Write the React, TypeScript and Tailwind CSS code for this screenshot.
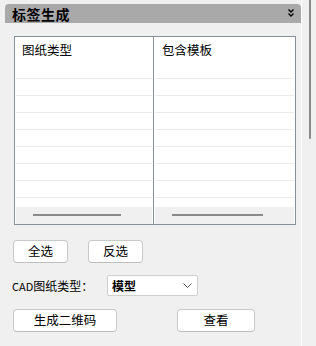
import React from "react";

const font = { fontFamily: '"Noto Sans CJK SC", "Noto Sans", sans-serif' };

function Column({ title, pl }: { title: string; pl: string }) {
  return (
    <div className="flex flex-col h-full bg-white">
      <div className="h-[170px] overflow-hidden px-[1px]">
        <div className={`h-[41px] pt-[4px] text-[12.5px] leading-[17px] text-black ${pl}`}>{title}</div>
        {Array.from({ length: 8 }).map((_, i) => (
          <div key={i} className="h-[17px] border-t border-[#ececec]" />
        ))}
      </div>
      <div className="h-[17px] mx-[1px] bg-[#f0f0f0] pt-[7px] pl-[17px] pr-[31px]">
        <div className="h-[2px] bg-[#8a8a8a]" />
      </div>
    </div>
  );
}

function Btn({ children, w }: { children: React.ReactNode; w: string }) {
  return (
    <div
      className={`${w} h-[23px] bg-white border border-[#c9c9c9] border-b-[#bdbdbd] rounded-[4px] flex items-center justify-center text-[12.5px] text-black leading-none`}
    >
      {children}
    </div>
  );
}

export default function App() {
  return (
    <div className="w-[316px] h-[346px] bg-[#f0f0f0] flex overflow-hidden" style={font}>
      <div className="w-[301px] h-full flex flex-col">
        <div className="ml-[5px] mt-[4px] h-[19px] bg-[#a9a9a9] rounded-t-[4px] flex items-center justify-between pl-[7px] pr-[7px]">
          <span className="text-[14px] font-bold text-black leading-none tracking-[0.5px]">标签生成</span>
          <svg width="6" height="8" viewBox="0 0 6 8" className="mt-[-2px]">
            <path d="M0.5 0.5 L3 3 L5.5 0.5" stroke="black" strokeWidth="1.4" fill="none" />
            <path d="M0.5 4.5 L3 7 L5.5 4.5" stroke="black" strokeWidth="1.4" fill="none" />
          </svg>
        </div>
        <div className="ml-[14px] mt-[13px] w-[282px] h-[189px] border border-[#8a9099] flex">
          <div className="w-[138px] h-full">
            <Column title="图纸类型" pl="pl-[6px]" />
          </div>
          <div className="w-[1px] h-full bg-[#8a9099]" />
          <div className="flex-1 h-full">
            <Column title="包含模板" pl="pl-[7px]" />
          </div>
        </div>
        <div className="flex ml-[13px] mt-[15px] gap-[20px]">
          <Btn w="w-[55px]">全选</Btn>
          <Btn w="w-[55px]">反选</Btn>
        </div>
        <div className="flex items-center ml-[12px] mt-[12px]">
          <span className="text-[12px] text-black w-[95px] leading-none">
            <span className="text-[11px]">CAD</span>图纸类型：
          </span>
          <div className="w-[91px] h-[21px] bg-white border border-[#cfcfcf] rounded-[2px] flex items-center justify-between pl-[4px] pr-[5px]">
            <span className="text-[12px] font-bold text-black leading-none">模型</span>
            <svg width="9" height="5" viewBox="0 0 9 5">
              <path d="M0.5 0.5 L4.5 4.5 L8.5 0.5" stroke="#555" strokeWidth="1" fill="none" />
            </svg>
          </div>
        </div>
        <div className="flex ml-[13px] mt-[13px]">
          <Btn w="w-[104px]">生成二维码</Btn>
          <div className="ml-[60px]">
            <Btn w="w-[78px]">查看</Btn>
          </div>
        </div>
      </div>
      <div className="w-[1px] h-full bg-white" />
      <div className="flex-1 h-full bg-[#f0f0f0] relative">
        <div className="absolute left-[7px] top-0 w-[2px] h-[139px] bg-[#8a8a8a] rounded-b-[1px]" />
      </div>
    </div>
  );
}
